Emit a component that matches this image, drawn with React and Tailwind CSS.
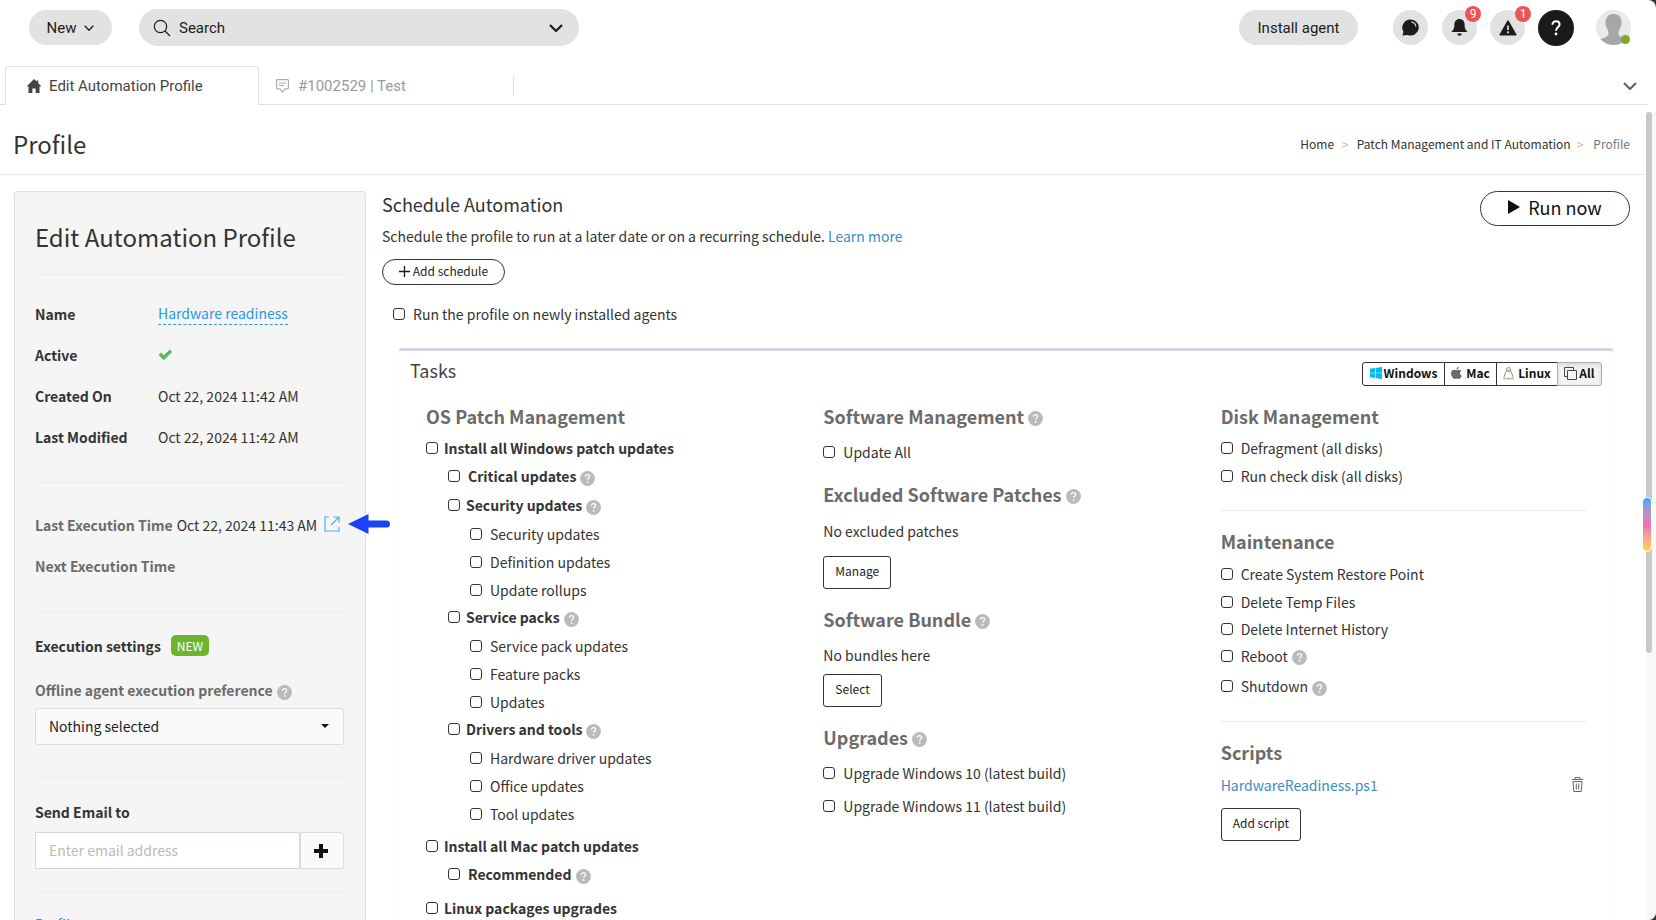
import React, { useState } from 'react';

const windowsTasks = [
  {
    label: 'Security updates',
    children: ['Security updates', 'Definition updates', 'Update rollups']
  },
  {
    label: 'Service packs',
    children: ['Service pack updates', 'Feature packs', 'Updates']
  },
  {
    label: 'Drivers and tools',
    children: ['Hardware driver updates', 'Office updates', 'Tool updates']
  }
];

const details = [
  { label: 'Created On', value: 'Oct 22, 2024 11:42 AM' },
  { label: 'Last Modified', value: 'Oct 22, 2024 11:42 AM' }
];

const ChevronIcon = ({ className, strokeWidth = 2 }) => (
  <svg
    className={className}
    viewBox="0 0 14 8"
    fill="none"
    stroke="currentColor"
    strokeWidth={strokeWidth}
    aria-hidden="true"
  >
    <path d="M1 1l6 6 6-6" />
  </svg>
);

const HelpIcon = ({ className = '' }) => (
  <svg className={`h-[15px] w-[15px] shrink-0 ${className}`} viewBox="0 0 15 15" role="img" aria-label="Help">
    <circle cx="7.5" cy="7.5" r="7.4" fill="#bababa" />
    <path
      d="M5.4 5.8c0-1.3.9-2.1 2.1-2.1s2.1.8 2.1 1.9c0 1.5-2 1.6-2 3.2"
      fill="none"
      stroke="#fff"
      strokeWidth="1.3"
    />
    <circle cx="7.6" cy="10.9" r="0.9" fill="#fff" />
  </svg>
);

const CheckRow = ({ label, bold, help, className = 'h-7', gap = 'gap-2' }) => (
  <div className={`flex items-center ${className}`}>
    <label className={`flex items-center ${gap} ${bold ? 'font-bold' : ''}`}>
      <input
        type="checkbox"
        className="h-3 w-3 shrink-0 appearance-none rounded-[3px] border border-[#333] bg-white checked:bg-[#333]"
      />
      <span>{label}</span>
    </label>
    {help && <HelpIcon className="mt-1 ml-1" />}
  </div>
);

const SectionTitle = ({ children, help }) => (
  <h4 className="flex h-6 items-center text-[18px] leading-6 font-bold text-[#6b6b6b]">
    {children}
    {help && <HelpIcon className="mt-1 ml-1" />}
  </h4>
);

const BoxButton = ({ children, className = '' }) => (
  <button
    type="button"
    className={`h-[33px] self-start rounded-[3px] border border-[#333] bg-white px-[11px] pb-1 text-[12px] leading-4 text-[#1c1c1c] ${className}`}
  >
    {children}
  </button>
);

const TopBar = () => (
  <header className="flex h-[53px] items-center pt-0.5 pr-[25px] pl-[29px] font-[Roboto,sans-serif] text-[15px] text-[#1c1c1c]">
    <button type="button" className="flex h-[35px] w-[83px] items-center justify-center gap-2 rounded-full bg-[#e2e2e2]">
      New
      <ChevronIcon className="h-[6px] w-[10px]" />
    </button>
    <div className="ml-[27px] flex h-[37px] w-[440px] items-center rounded-full bg-[#e2e2e2] pr-4 pl-[14px]">
      <svg className="h-[18px] w-[18px]" viewBox="0 0 18 18" fill="none" stroke="#1c1c1c" strokeWidth="1.2" aria-hidden="true">
        <circle cx="7.5" cy="7.5" r="6.2" />
        <path d="M12 12l5 5" />
      </svg>
      <input
        type="text"
        aria-label="Search"
        placeholder="Search"
        className="ml-2 min-w-0 flex-1 bg-transparent placeholder:text-[#1c1c1c] focus:outline-none"
      />
      <button type="button" aria-label="Search options">
        <ChevronIcon className="h-2 w-[14px]" strokeWidth={2.2} />
      </button>
    </div>
    <button type="button" className="ml-auto h-[35px] w-[119px] rounded-full bg-[#e2e2e2]">
      Install agent
    </button>
    <button type="button" aria-label="Chat" className="ml-[35px] flex h-[35px] w-[35px] items-center justify-center rounded-full bg-[#e2e2e2]">
      <svg className="h-[17px] w-[17px]" viewBox="0 0 17 17" aria-hidden="true">
        <path d="M8.5.5a8 8 0 1 1-2.8 15.4L.6 16.5l.8-4A8 8 0 0 1 8.5.5z" fill="#1c1c1c" />
        <path d="M9.5 3a5 5 0 0 1 4.3 4.2" fill="none" stroke="#e2e2e2" strokeWidth="1.1" strokeLinecap="round" />
      </svg>
    </button>
    <button type="button" aria-label="Notifications" className="relative ml-[14px] flex h-[35px] w-[35px] items-center justify-center rounded-full bg-[#e2e2e2]">
      <svg className="h-[17px] w-[17px]" viewBox="0 0 17 17" fill="#1c1c1c" aria-hidden="true">
        <path d="M8.5 0c3.2 0 5 2.3 5.1 5.5 0 4 .9 5.1 3.1 7.5H.3c2.2-2.4 3.1-3.5 3.1-7.5C3.5 2.3 5.3 0 8.5 0z" />
        <path d="M6.3 14.6h4.4a2.2 2.2 0 0 1-4.4 0z" />
      </svg>
      <span className="absolute -top-1 -right-1 flex h-4 w-4 items-center justify-center rounded-full bg-[#f05252] text-[12px] leading-4 text-white">9</span>
    </button>
    <button type="button" aria-label="Alerts" className="relative ml-[13px] flex h-[35px] w-[35px] items-center justify-center rounded-full bg-[#e2e2e2]">
      <svg className="h-[16px] w-[18px]" viewBox="0 0 18 16" aria-hidden="true">
        <path d="M9 1.2L16.8 14.8H1.2z" fill="#1c1c1c" stroke="#1c1c1c" strokeWidth="1.6" strokeLinejoin="round" />
        <path d="M9 5.5v4.5" stroke="#e2e2e2" strokeWidth="1.7" />
        <circle cx="9" cy="12.3" r="1.1" fill="#e2e2e2" />
      </svg>
      <span className="absolute -top-1 -right-1.5 flex h-4 w-4 items-center justify-center rounded-full bg-[#f05252] text-[12px] leading-4 text-white">1</span>
    </button>
    <button type="button" aria-label="Help" className="ml-[13px] flex h-9 w-9 items-center justify-center rounded-full bg-[#1a1a1a]">
      <svg className="h-4 w-[10px]" viewBox="0 0 10 16" aria-hidden="true">
        <path d="M1.4 4.8C1.4 2.6 2.9 1.2 5 1.2s3.6 1.3 3.6 3.2C8.6 7 5 7.2 5 10.8" fill="none" stroke="#fff" strokeWidth="2" />
        <circle cx="5" cy="14" r="1.4" fill="#fff" />
      </svg>
    </button>
    <button type="button" aria-label="Account" className="relative ml-[22px] h-[35px] w-[35px]">
      <svg className="h-[35px] w-[35px] rounded-full" viewBox="0 0 35 35" aria-hidden="true">
        <rect width="35" height="35" fill="#eaeaea" />
        <path
          d="M17.5 4c5 0 8 3.5 8 8 0 3.5-.8 5-1.8 7-.9 1.8-1.2 3-1.2 5 0 3 5 3.5 8.5 5.5V35H4v-5.5c3.5-2 8.5-2.5 8.5-5.5 0-2-.3-3.2-1.2-5-1-2-1.8-3.5-1.8-7 0-4.5 3-8 8-8z"
          fill="#a5a8aa"
        />
      </svg>
      <span className="absolute right-px bottom-px h-[9px] w-[9px] rounded-full bg-[#82a61f]" />
    </button>
  </header>
);

const TabBar = () => (
  <nav aria-label="Open pages" className="mr-2 flex h-[52px] items-end border-b border-[#e0e0e0] pt-[13px] pl-[5px] font-[Roboto,sans-serif] text-[15px]">
    <a href="#profile" aria-current="page" className="-mb-px flex h-[39px] w-[254px] items-center rounded-t border border-b-0 border-[#e0e0e0] bg-white pl-[21px] text-[#444]">
      <svg className="mr-2 h-[14px] w-[14px]" viewBox="0 0 14 14" fill="#444" aria-hidden="true">
        <path d="M7 0l2.6 2.6V1.5h1.7v2.8L14 7v.6h-1.5V14H8.6V9.5H5.4V14H1.5V7.6H0V7z" />
      </svg>
      Edit Automation Profile
    </a>
    <a href="#ticket" className="flex h-9 w-[254px] items-center pl-[17px] text-[#999]">
      <svg className="mr-[9px] h-[14px] w-[13px]" viewBox="0 0 13 14" fill="none" stroke="#aaa" strokeWidth="1.1" aria-hidden="true">
        <path d="M1.5.6h10q.9 0 .9.9v7.5q0 .9-.9.9H9L6.5 13 4 9.9H1.5Q.6 9.9.6 9V1.5q0-.9.9-.9zM3 4h7M3 6.5h5" />
      </svg>
      #1002529 | Test
    </a>
    <span className="mb-2 h-5 w-px bg-[#ddd]" />
    <button type="button" aria-label="More tabs" className="mr-[11px] mb-[14px] ml-auto text-[#666]">
      <ChevronIcon className="h-2 w-[14px]" strokeWidth={2.2} />
    </button>
  </nav>
);

const PageTitle = () => (
  <div className="flex h-[70px] items-center justify-between border-b border-[#e7e7e7] pt-2 pr-4 pl-[13px]">
    <h1 className="text-[24px] leading-8">Profile</h1>
    <nav aria-label="Breadcrumb" className="flex items-center text-[12px] leading-4">
      <a href="#home">Home</a>
      <span className="mx-2 text-[#bbb]">&gt;</span>
      <a href="#patch">Patch Management and IT Automation</a>
      <span className="mr-2.5 ml-1.5 text-[#bbb]">&gt;</span>
      <span className="text-[#777]">Profile</span>
    </nav>
  </div>
);

const Divider = ({ className = '' }) => <hr className={`border-[#ebebeb] ${className}`} />;

const Sidebar = () => (
  <aside className="w-[352px] shrink-0 rounded-t border border-b-0 border-[#dedede] bg-[#f5f5f5] pt-[27px] pr-[21px] pl-5">
    <h2 className="mb-[19px] text-[24px] leading-9">Edit Automation Profile</h2>
    <Divider />
    <dl className="mt-[18px] mb-[25px] grid grid-cols-[123px_1fr] [&>*]:flex [&>*]:h-[41px] [&>*]:items-center [&>dt]:font-bold">
      <dt>Name</dt>
      <dd>
        <a href="#name" className="border-b border-dashed border-[#2e97e0] leading-[22px] text-[#2e97e0]">
          Hardware readiness
        </a>
      </dd>
      <dt>Active</dt>
      <dd>
        <svg className="h-[11px] w-[15px]" viewBox="0 0 15 11" fill="none" stroke="#5cb85c" strokeWidth="3.4" role="img" aria-label="Yes">
          <path d="M1.8 4.8l4 4 7.2-7" />
        </svg>
      </dd>
      {details.map((item) => (
        <React.Fragment key={item.label}>
          <dt>{item.label}</dt>
          <dd>{item.value}</dd>
        </React.Fragment>
      ))}
    </dl>
    <Divider />
    <div className="pt-[21px] pb-[26px]">
      <div className="relative flex h-[41px] items-center">
        <span className="font-bold text-[#6b6b6b]">Last Execution Time</span>
        <span className="ml-1">Oct 22, 2024 11:43 AM</span>
        <a href="#log" aria-label="Open execution log" className="ml-[7px]">
          <svg className="mb-0.5 h-4 w-4" viewBox="0 0 16 16" fill="none" stroke="#4fb0e8" strokeWidth="1.2" aria-hidden="true">
            <path d="M5 1H1v14h14v-4M9.5 1H15v5.5M15 1L7 9" />
          </svg>
        </a>
        <svg className="absolute top-[10px] left-[313px] h-5 w-[42px]" viewBox="0 0 42 20" fill="#1a43f5" aria-hidden="true">
          <path d="M0 10L20.5 0v6.5H38.5a3.5 3.5 0 0 1 0 7H20.5V20z" />
        </svg>
      </div>
      <div className="flex h-[41px] items-center font-bold text-[#6b6b6b]">Next Execution Time</div>
    </div>
    <Divider />
    <div className="mt-[22px] flex items-center gap-2.5">
      <h3 className="font-bold">Execution settings</h3>
      <span className="rounded-[5px] bg-[#6cb52d] px-1.5 text-[12px] leading-[21px] text-white">NEW</span>
    </div>
    <div className="mt-6 mb-2 flex items-center leading-5">
      <label htmlFor="offline-preference" className="font-bold text-[#6b6b6b]">
        Offline agent execution preference
      </label>
      <HelpIcon className="mt-1 ml-1" />
    </div>
    <div className="relative">
      <select
        id="offline-preference"
        className="h-[37px] w-full appearance-none rounded-[3px] border border-[#d9dbe0] bg-[#fafafa] pb-0.5 pl-[13px] text-[#1c1c1c]"
      >
        <option>Nothing selected</option>
      </select>
      <svg className="pointer-events-none absolute top-4 right-[15px] h-1 w-2" viewBox="0 0 8 4" fill="#111" aria-hidden="true">
        <path d="M0 0h8L4 4z" />
      </svg>
    </div>
    <Divider className="mt-8 mb-6" />
    <label htmlFor="email" className="block leading-5 font-bold">Send Email to</label>
    <div className="mt-[10px] mb-[22px] flex">
      <input
        id="email"
        type="email"
        placeholder="Enter email address"
        className="h-[37px] min-w-0 flex-1 border border-[#d2d6de] bg-white px-[13px] pb-0.5 placeholder:text-[#bbb]"
      />
      <button type="button" aria-label="Add email" className="flex h-[37px] w-11 items-center justify-center rounded-[3px] border border-[#d9dbe0] bg-[#fafafa] pr-0.5">
        <svg className="h-[14px] w-[14px]" viewBox="0 0 14 14" fill="#111" aria-hidden="true">
          <path d="M5 0h4v5h5v4H9v5H5V9H0V5h5z" />
        </svg>
      </button>
    </div>
    <Divider />
    <a href="#notes" className="mt-[22px] block leading-5 text-[#3c8dbc]">Profile notes</a>
  </aside>
);

const WindowsIcon = () => (
  <svg className="h-3 w-3" viewBox="0 0 12 12" fill="#00bcf2" aria-hidden="true">
    <path d="M0 1.7L5 1v4.7H0zM5.6.9L12 0v5.7H5.6zM0 6.3h5V11l-5-.7zM5.6 6.3H12V12l-6.4-.9z" />
  </svg>
);

const AppleIcon = () => (
  <svg className="h-3 w-[11px]" viewBox="0 0 11 12" fill="#6b6b6b" aria-hidden="true">
    <path d="M7.7 0c.1 1-.9 2.4-2.2 2.4C5.3 1.3 6.5.1 7.7 0zM5.6 3.2c.6 0 1.2-.5 2.2-.5.9 0 1.9.5 2.5 1.4-2 1.2-1.7 3.9.5 4.7-.5 1.3-1.7 3.1-2.8 3.1-.8 0-1.2-.5-2.2-.5s-1.4.5-2.2.5C2.1 11.9 0 8.9 0 6.3c0-2.3 1.5-3.6 3-3.6 1 0 1.9.5 2.6.5z" />
  </svg>
);

const LinuxIcon = () => (
  <svg className="h-[13px] w-[11px]" viewBox="0 0 11 13" fill="none" stroke="#777" strokeWidth="0.9" aria-hidden="true">
    <path d="M5.5.6c1.5 0 2 1 2 2.4 0 2 2 3.3 2 6.3M5.5.6c-1.5 0-2 1-2 2.4 0 2-2 3.3-2 6.3M4 11.6h3M5.5 3.3l1.3.8-1.3.7-1.3-.7z" />
    <path d="M1 9.5l2.3 2.7-2.6-.3zM10 9.5l-2.3 2.7 2.6-.3z" stroke="#b5a58a" />
  </svg>
);

const AllIcon = () => (
  <svg className="h-[13px] w-[13px]" viewBox="0 0 13 13" fill="none" stroke="#444" aria-hidden="true">
    <path d="M3.5 3.5h9v9h-9zM3 9.5H.5v-9h9V3" />
  </svg>
);

const platforms = [
  { id: 'windows', label: 'Windows', Icon: WindowsIcon, className: 'w-[83px] gap-0.5' },
  { id: 'mac', label: 'Mac', Icon: AppleIcon, className: '-ml-px w-[53px] gap-1' },
  { id: 'linux', label: 'Linux', Icon: LinuxIcon, className: '-ml-px w-[62px] gap-1' },
  { id: 'all', label: 'All', Icon: AllIcon, className: '-ml-px w-[45px] gap-0.5' }
];

const PlatformFilter = () => {
  const [active, setActive] = useState('all');

  return (
    <div className="flex text-[12px] leading-4 font-bold text-[#111]">
      {platforms.map(({ id, label, Icon, className }) => (
        <button
          key={id}
          type="button"
          aria-pressed={active === id}
          onClick={() => setActive(id)}
          className={`flex h-6 items-center justify-center border pb-0.5 first:rounded-l-[3px] last:rounded-r-[3px] ${className} ${
            active === id ? 'border-[#adadad] bg-[#f4f4f4] shadow-[inset_0_2px_4px_rgba(0,0,0,0.12)]' : 'border-[#333] bg-white'
          }`}
        >
          <Icon />
          {label}
        </button>
      ))}
    </div>
  );
};

const PatchColumn = () => (
  <div className="px-4">
    <SectionTitle>OS Patch Management</SectionTitle>
    <div className="mt-1.5">
      <CheckRow label="Install all Windows patch updates" bold gap="gap-1.5" />
      <CheckRow label="Critical updates" bold help className="mb-0.5 ml-[22px] h-7" />
      {windowsTasks.map((group) => (
        <div key={group.label} className="ml-[22px]">
          <CheckRow label={group.label} bold help className="mb-0.5 h-[26px]" gap="gap-1.5" />
          {group.children.map((child) => (
            <CheckRow key={child} label={child} className="ml-[22px] h-7" />
          ))}
        </div>
      ))}
      <CheckRow label="Install all Mac patch updates" bold className="mt-1 h-7" gap="gap-1.5" />
      <CheckRow label="Recommended" bold help className="ml-[22px] h-7" />
      <CheckRow label="Linux packages upgrades" bold className="mt-1.5 h-7" gap="gap-1.5" />
    </div>
  </div>
);

const SoftwareColumn = () => (
  <div className="flex flex-col px-4">
    <SectionTitle help>Software Management</SectionTitle>
    <CheckRow label="Update All" className="mt-2.5 mb-4 h-7" />
    <SectionTitle help>Excluded Software Patches</SectionTitle>
    <p className="mt-[15px] leading-5">No excluded patches</p>
    <BoxButton className="mt-[15px] mb-[18px]">Manage</BoxButton>
    <SectionTitle help>Software Bundle</SectionTitle>
    <p className="mt-3.5 leading-5">No bundles here</p>
    <BoxButton className="mt-[9px] mb-[18px]">Select</BoxButton>
    <SectionTitle help>Upgrades</SectionTitle>
    <CheckRow label="Upgrade Windows 10 (latest build)" className="mt-[7px] h-[33px]" />
    <CheckRow label="Upgrade Windows 11 (latest build)" className="h-[33px]" />
  </div>
);

const MaintenanceColumn = () => (
  <div className="flex flex-col px-4">
    <SectionTitle>Disk Management</SectionTitle>
    <CheckRow label="Defragment (all disks)" className="mt-1.5 h-7" />
    <CheckRow label="Run check disk (all disks)" />
    <hr className="mt-5 mb-[18px] border-[#ebebeb]" />
    <SectionTitle>Maintenance</SectionTitle>
    <CheckRow label="Create System Restore Point" className="mt-[7px] h-7" />
    <CheckRow label="Delete Temp Files" className="h-[27px]" />
    <CheckRow label="Delete Internet History" className="h-[27px]" />
    <CheckRow label="Reboot" help className="h-[27px]" />
    <CheckRow label="Shutdown" help className="mt-[3px] h-7" />
    <hr className="mt-[21px] mb-[18px] border-[#ebebeb]" />
    <SectionTitle>Scripts</SectionTitle>
    <div className="mt-[11px] mb-[13px] flex h-5 items-center justify-between">
      <a href="#script" className="text-[#3c8dbc]">HardwareReadiness.ps1</a>
      <button type="button" aria-label="Delete script" className="mr-[3px] mb-0.5">
        <svg className="h-[15px] w-[11px]" viewBox="0 0 11 15" fill="none" stroke="#666" aria-hidden="true">
          <path d="M0 2.5h11M3 2V.6h5V2M1 4.5l.8 10h7.4l.8-10zM4.3 6.5v6M6.7 6.5v6" />
        </svg>
      </button>
    </div>
    <BoxButton>Add script</BoxButton>
  </div>
);

const Content = () => (
  <section className="min-w-0 flex-1 pl-4">
    <div className="flex items-start justify-between pr-4">
      <div>
        <h2 className="text-[18px] leading-[26px]">Schedule Automation</h2>
        <p className="mt-[9px] mb-[13px] leading-5">
          Schedule the profile to run at a later date or on a recurring schedule.{' '}
          <a href="#learn" className="text-[#3c8dbc]">Learn more</a>
        </p>
        <button type="button" className="flex h-[26px] w-[123px] items-center justify-center gap-[3px] rounded-full border border-[#333] pb-0.5 text-[12px] leading-4 text-[#1c1c1c]">
          <svg className="h-[11px] w-[11px]" viewBox="0 0 11 11" stroke="#1c1c1c" strokeWidth="1.3" aria-hidden="true">
            <path d="M5.5 0v11M0 5.5h11" />
          </svg>
          Add schedule
        </button>
      </div>
      <button type="button" className="flex h-[35px] w-[150px] items-center justify-center gap-2 rounded-full border border-[#333] pb-1 text-[18px] text-[#111]">
        <svg className="h-[14px] w-3" viewBox="0 0 12 14" fill="#111" aria-hidden="true">
          <path d="M0 0l12 7-12 7z" />
        </svg>
        Run now
      </button>
    </div>
    <CheckRow label="Run the profile on newly installed agents" className="mt-[15px] ml-[11px] h-7" />
    <div className="mt-5 mr-[33px] ml-[17px] rounded-t-[3px] border-t-[3px] border-[#d2d6de] shadow-[0_0_1px_rgba(0,0,0,0.15)]">
      <div className="flex items-start justify-between px-[11px] pt-[11px]">
        <h3 className="text-[18px] leading-4 text-[#444]">Tasks</h3>
        <PlatformFilter />
      </div>
      <div className="mt-[18px] grid grid-cols-3 px-[11px] pb-10">
        <PatchColumn />
        <SoftwareColumn />
        <MaintenanceColumn />
      </div>
    </div>
  </section>
);

export default function App() {
  return (
    <div className="h-screen overflow-hidden bg-[#333]">
      <div className="relative flex h-full flex-col overflow-hidden rounded-r-lg bg-white font-['Noto_Sans_CJK_SC',sans-serif] text-[14px] leading-5 text-[#333]">
        <TopBar />
        <TabBar />
        <main className="mr-[10px] min-h-0 flex-1 overflow-hidden">
          <PageTitle />
          <div className="flex pt-4 pl-3.5">
            <Sidebar />
            <Content />
          </div>
        </main>
        {/* scroll position indicator */}
        <div className="absolute top-[112px] right-0 bottom-0 w-[10px] bg-[#f8f8f8]">
          <div className="h-[541px] w-1.5 rounded-full bg-[#c8c8c8]" />
        </div>
        <button
          type="button"
          aria-label="Assistant"
          className="absolute top-[497px] right-[4px] h-[55px] w-[10px] rounded-full border border-white bg-linear-to-b from-[#00adef] via-[#f070b0] to-[#ffd83d]"
        />
      </div>
    </div>
  );
}
